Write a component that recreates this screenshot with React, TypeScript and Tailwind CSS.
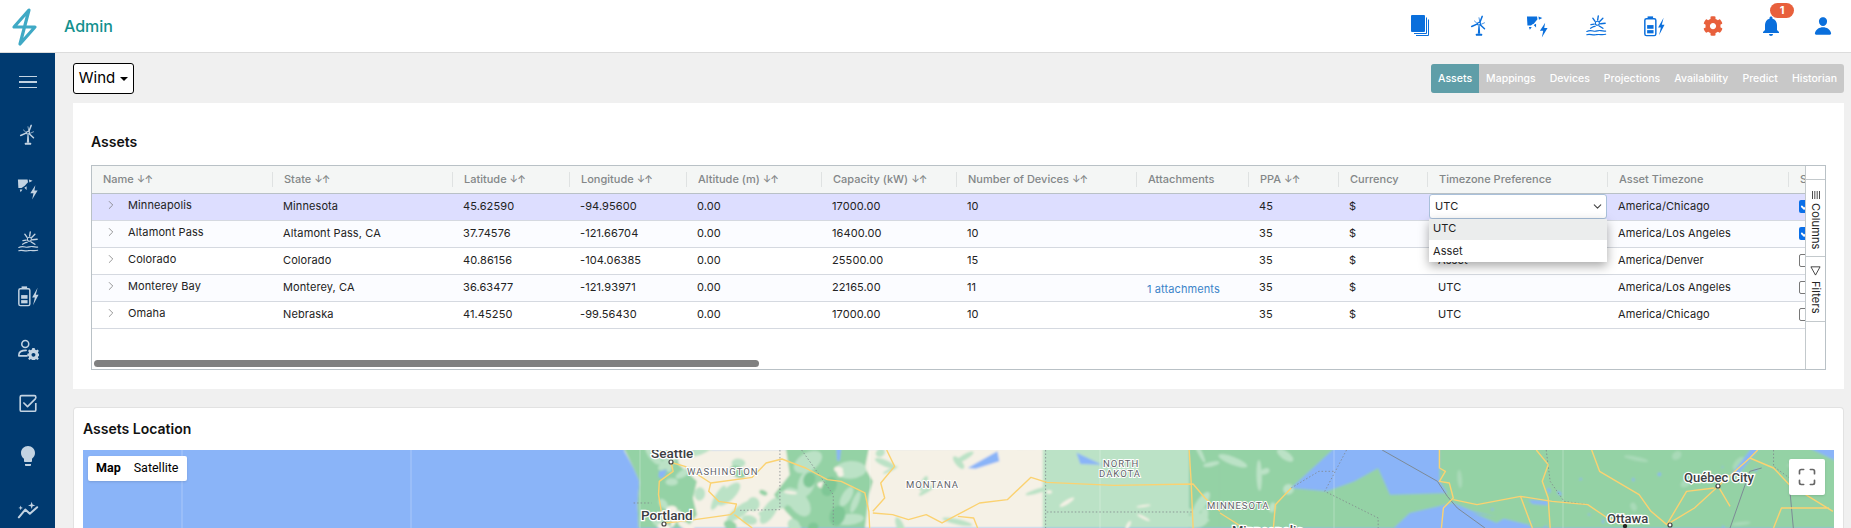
import { Check, ChevronDown, ChevronRight, Maximize } from 'lucide-react';
import { MdLightbulb, MdNotifications } from 'react-icons/md';
import { FaCog } from 'react-icons/fa';
import { IoPerson } from 'react-icons/io5';

function Logo() {
  return (
    <svg viewBox="0 0 50 53" className="w-[50px] h-[53px]">
      <path d="M29 10 L14 27 H35 L20 44 Z" fill="none" stroke="#3fa9c5" strokeWidth="3.2" strokeLinecap="round" strokeLinejoin="round" />
    </svg>
  );
}

function PagesIcon() {
  return (
    <svg viewBox="0 0 20 24" className="w-[20px] h-[24px] text-[#0a6fdc]">
      <rect x="1" y="1" width="14" height="17" rx="1" fill="currentColor" />
      <path d="M16.5 3.5 V19.5 H4" fill="none" stroke="currentColor" strokeWidth="1" />
      <path d="M18.5 5.5 V21.5 H6" fill="none" stroke="currentColor" strokeWidth="1" />
    </svg>
  );
}

function TurbineIcon({ className }: { className: string }) {
  return (
    <svg viewBox="0 0 24 24" className={className}>
      <g fill="none" stroke="currentColor" strokeLinecap="round">
        <circle cx="12" cy="9.5" r="1.6" strokeWidth="1.3" />
        <path d="M13 8 L15.5 1.5 M10.4 9.6 L4 12.5 M13.3 10.6 L18 15" strokeWidth="1.6" />
        <path d="M13 8 L12 3 M10.4 9.6 L7 6.5 M13.3 10.6 L18 8.5" strokeWidth="0.8" />
      </g>
      <path d="M11.3 12 H12.7 L13.3 20.5 H10.7 Z" fill="currentColor" />
      <rect x="8.6" y="20.5" width="6.8" height="2.2" rx="0.6" fill="currentColor" />
    </svg>
  );
}

function SolarIcon({ className }: { className: string }) {
  return (
    <svg viewBox="0 0 24 24" className={className}>
      <g fill="currentColor">
        <path d="M1 1.5 H11.5 L12 4.5 L8.5 8.5 L5 11 L1.5 11 Z" />
        <path d="M13 1.5 L17 3 L13.5 5 Z M3 12.5 L6 12.5 L4 15.5 Z M8 10.5 L10.5 9 L10.5 13 Z" />
        <path d="M20 8 L14.5 16.5 H18 L16.5 23.5 L22.5 13.5 H19 Z" />
      </g>
    </svg>
  );
}

function WaveSunIcon({ className }: { className: string }) {
  return (
    <svg viewBox="0 0 24 24" className={className}>
      <g fill="none" stroke="currentColor" strokeLinecap="round">
        <circle cx="13.5" cy="9" r="2.2" strokeWidth="1.2" />
        <path d="M13.8 5.5 L14.5 1 M11 7 L8.5 3.5 M16 7 L19.5 3.5 M17 9.5 L22 9 M15.5 12 L19.5 14.5 M10 10 L6.5 10.5" strokeWidth="1.5" />
        <path d="M6 14.5 C8 13.5 9 12.5 11 12.5 M2 18 C5 16.5 7 17 9 17.5 C12 18.5 14 16.5 17 17 C19 17.5 20 17.8 22.5 17.5" strokeWidth="1.3" />
        <path d="M2 21.5 C5 20.5 8 22 12 21.5 C16 20.8 19 22 22.5 21" strokeWidth="1.3" />
      </g>
    </svg>
  );
}

function BatteryIcon({ className }: { className: string }) {
  return (
    <svg viewBox="0 0 24 24" className={className}>
      <rect x="2" y="4" width="12" height="18.5" rx="1.8" fill="none" stroke="currentColor" strokeWidth="1.6" />
      <g fill="currentColor">
        <rect x="5" y="1.5" width="6" height="2.2" />
        <rect x="4.5" y="11" width="7" height="4" />
        <rect x="4.5" y="16.5" width="7" height="3.5" />
        <path d="M22.5 3 L16.5 13.5 H19.5 L17.5 22 L23.5 10.5 H20.5 Z" />
      </g>
    </svg>
  );
}

function UserGearIcon({ className }: { className: string }) {
  return (
    <svg viewBox="0 0 24 24" className={className}>
      <g fill="none" stroke="currentColor" strokeWidth="1.7" strokeLinecap="round">
        <circle cx="9" cy="6.5" r="3.8" />
        <path d="M2 19.5 V18.5 C2 15 5 13.5 10 13.5 M2 19.5 H11" />
      </g>
      <g transform="translate(12.5 11) scale(0.42)" fill="currentColor">
        <path d="M10 0 H16 L17 4 L20.5 5.5 L24 3.5 L27 7.5 L24.5 10.5 L25.5 14 L29 15 V20 L25.5 21 L24.5 24.5 L27 27.5 L23 31 L20 28.5 L17 30 L16 34 H10 L9 30 L6 28.5 L3 31 L-1 27.5 L1.5 24.5 L0.5 21 L-3 20 V15 L0.5 14 L1.5 10.5 L-1 7.5 L2 3.5 L5.5 5.5 L9 4 Z M13 12.5 A5 5 0 1 0 13.01 12.5 Z" fillRule="evenodd" />
      </g>
    </svg>
  );
}

function CheckIcon({ className }: { className: string }) {
  return (
    <svg viewBox="0 0 24 24" className={className} fill="none" stroke="currentColor" strokeWidth="1.8">
      <path d="M20.5 12 V19.5 A1.5 1.5 0 0 1 19 21 H5 A1.5 1.5 0 0 1 3.5 19.5 V5.5 A1.5 1.5 0 0 1 5 4 H19 A1.5 1.5 0 0 1 20.5 5.5 V7" />
      <path d="M7.5 12 L11.5 16 L20 7.5" strokeLinecap="round" strokeLinejoin="round" />
    </svg>
  );
}

function TrendIcon({ className }: { className: string }) {
  return (
    <svg viewBox="0 0 24 24" className={className}>
      <path d="M2 20 L9 11.5 L14 16 L22 9" fill="none" stroke="currentColor" strokeWidth="2.2" strokeLinecap="round" strokeLinejoin="round" />
      <path d="M16 3 L17 6 L20 7 L17 8 L16 11 L15 8 L12 7 L15 6 Z M4 7 L4.7 9 L6.5 9.7 L4.7 10.4 L4 12.4 L3.3 10.4 L1.5 9.7 L3.3 9 Z" fill="currentColor" />
    </svg>
  );
}

function TopNav() {
  return (
    <header className="h-[53px] shrink-0 flex items-center bg-white border-b border-[#dcdcdc]">
      <Logo />
      <span className="ml-[14px] text-base font-medium text-[#12908e]">Admin</span>
      <div className="ml-auto flex items-center pr-[5px]">
        <div className="w-[58.5px] flex justify-center"><PagesIcon /></div>
        <div className="w-[58.5px] flex justify-center text-[#0a6fdc]"><TurbineIcon className="w-[22px] h-[24px]" /></div>
        <div className="w-[58.5px] flex justify-center text-[#0a6fdc]"><SolarIcon className="w-[23px] h-[23px]" /></div>
        <div className="w-[58.5px] flex justify-center text-[#0a6fdc]"><WaveSunIcon className="w-[22px] h-[22px]" /></div>
        <div className="w-[58.5px] flex justify-center text-[#0a6fdc]"><BatteryIcon className="w-[22px] h-[22px]" /></div>
        <div className="w-[58.5px] flex justify-center"><FaCog className="w-[20px] h-[20px] text-[#e8603c]" /></div>
        <div className="relative w-[58.5px] flex justify-center">
          <MdNotifications className="w-[24px] h-[24px] text-[#0a6fdc]" />
          <span className="absolute left-[28px] top-[-11px] w-[24px] h-[15px] rounded-full bg-[#e8603c] text-white text-[11px] font-bold leading-[15px] text-center">1</span>
        </div>
        <div className="w-[45.5px] flex justify-center"><IoPerson className="w-[20px] h-[20px] text-[#0a6fdc]" /></div>
      </div>
    </header>
  );
}

function SideNav() {
  const iconClass = 'w-[22px] h-[22px]';
  return (
    <aside className="w-[55px] shrink-0 bg-[#003a70] text-[#c3d3e2] flex flex-col items-center pt-[2px]">
      <div className="h-[53.5px] shrink-0 flex flex-col justify-center gap-[4px]">
        <div className="w-[18px] h-[1.5px] bg-[#c3d3e2]" />
        <div className="w-[18px] h-[1.5px] bg-[#c3d3e2]" />
        <div className="w-[18px] h-[1.5px] bg-[#c3d3e2]" />
      </div>
      <div className="h-[53.5px] shrink-0 flex items-center"><TurbineIcon className={iconClass} /></div>
      <div className="h-[53.5px] shrink-0 flex items-center"><SolarIcon className={iconClass} /></div>
      <div className="h-[53.5px] shrink-0 flex items-center"><WaveSunIcon className={iconClass} /></div>
      <div className="h-[53.5px] shrink-0 flex items-center"><BatteryIcon className={iconClass} /></div>
      <div className="h-[53.5px] shrink-0 flex items-center"><UserGearIcon className={iconClass} /></div>
      <div className="h-[53.5px] shrink-0 flex items-center"><CheckIcon className={iconClass} /></div>
      <div className="h-[53.5px] shrink-0 flex items-center"><MdLightbulb className="w-[24px] h-[24px]" /></div>
      <div className="h-[53.5px] shrink-0 flex items-center"><TrendIcon className={iconClass} /></div>
    </aside>
  );
}

const tabs = ['Mappings', 'Devices', 'Projections', 'Availability', 'Predict', 'Historian'];

const headers = [
  { label: 'Name', sort: true },
  { label: 'State', sort: true },
  { label: 'Latitude', sort: true },
  { label: 'Longitude', sort: true },
  { label: 'Altitude (m)', sort: true },
  { label: 'Capacity (kW)', sort: true },
  { label: 'Number of Devices', sort: true },
  { label: 'Attachments', sort: false },
  { label: 'PPA', sort: true },
  { label: 'Currency', sort: false },
  { label: 'Timezone Preference', sort: false },
  { label: 'Asset Timezone', sort: false },
  { label: 'S', sort: false },
];

const rows = [
  { name: 'Minneapolis', state: 'Minnesota', lat: '45.62590', lon: '-94.95600', cap: '17000.00', dev: '10', att: '', ppa: '45', pref: 'UTC', tz: 'America/Chicago', on: true },
  { name: 'Altamont Pass', state: 'Altamont Pass, CA', lat: '37.74576', lon: '-121.66704', cap: '16400.00', dev: '10', att: '', ppa: '35', pref: 'UTC', tz: 'America/Los Angeles', on: true },
  { name: 'Colorado', state: 'Colorado', lat: '40.86156', lon: '-104.06385', cap: '25500.00', dev: '15', att: '', ppa: '35', pref: 'Asset', tz: 'America/Denver', on: false },
  { name: 'Monterey Bay', state: 'Monterey, CA', lat: '36.63477', lon: '-121.93971', cap: '22165.00', dev: '11', att: '1 attachments', ppa: '35', pref: 'UTC', tz: 'America/Los Angeles', on: false },
  { name: 'Omaha', state: 'Nebraska', lat: '41.45250', lon: '-99.56430', cap: '17000.00', dev: '10', att: '', ppa: '35', pref: 'UTC', tz: 'America/Chicago', on: false },
];

function TimezoneSelect() {
  return (
    <div className="relative z-10">
      <div className="h-[25px] flex items-center justify-between pl-[5px] pr-[2px] bg-white rounded-[3px] border border-[#a9c0da]">
        <span>UTC</span>
        <ChevronDown className="w-[13px] h-[13px] text-[#444]" />
      </div>
      <div className="absolute top-full left-0 right-0 bg-white shadow-[0_4px_10px_rgba(0,0,0,0.35)]">
        <div className="h-[21px] flex items-center pl-[4px] pb-[2px] bg-[#ebeded]">UTC</div>
        <div className="h-[22px] flex items-center pl-[4px]">Asset</div>
      </div>
    </div>
  );
}

function AssetsTable() {
  return (
    <div className="relative h-[205px] overflow-hidden border border-[#b9c1c6] text-[11px] tracking-[0.1px] text-[#222]">
      <table className="table-fixed border-collapse w-[1760px]">
        <colgroup>
          <col className="w-[180px]" />
          <col className="w-[180px]" />
          <col className="w-[117px]" />
          <col className="w-[117px]" />
          <col className="w-[135px]" />
          <col className="w-[135px]" />
          <col className="w-[180px]" />
          <col className="w-[112px]" />
          <col className="w-[90px]" />
          <col className="w-[89px]" />
          <col className="w-[180px]" />
          <col className="w-[181px]" />
          <col className="w-[64px]" />
        </colgroup>
        <thead>
          <tr className="h-[27px] bg-[#f4f6f5] border-b border-[#b9c1c6]">
            {headers.map((h, i) => (
              <th key={h.label} className="p-0 font-medium text-left text-[#838788] tracking-normal">
                <div className={i === 0 ? 'h-[15px] flex items-center gap-[3px] pl-[11px]' : 'h-[15px] flex items-center gap-[3px] pl-[11px] border-l border-[#dfe2e2]'}>
                  {h.label}
                  {h.sort && <span className="text-[10px] tracking-[-1px]">↓↑</span>}
                </div>
              </th>
            ))}
          </tr>
        </thead>
        <tbody>
          {rows.map((r, i) => (
            <tr key={r.name} className={i === 0 ? 'h-[27px] bg-[#dddeff] border-b border-[#d5d9e0]' : i % 2 === 1 ? 'h-[27px] bg-[#fbfcff] border-b border-[#d5d9e0]' : 'h-[27px] bg-white border-b border-[#d5d9e0]'}>
              <td className="p-0">
                <div className="flex items-center pb-[3px]">
                  <ChevronRight className="ml-[12px] w-[14px] h-[14px] text-[#777]" strokeWidth={1.3} />
                  <span className="ml-[10px]">{r.name}</span>
                </div>
              </td>
              <td className="p-0 pl-[11px]">{r.state}</td>
              <td className="p-0 pl-[11px]">{r.lat}</td>
              <td className="p-0 pl-[11px]">{r.lon}</td>
              <td className="p-0 pl-[11px]">0.00</td>
              <td className="p-0 pl-[11px]">{r.cap}</td>
              <td className="p-0 pl-[11px]">{r.dev}</td>
              <td className="p-0 pl-[11px] pt-[3px] text-[#3b84c9]">{r.att}</td>
              <td className="p-0 pl-[11px]">{r.ppa}</td>
              <td className="p-0 pl-[11px]">$</td>
              <td className={i === 0 ? 'p-0 pl-[2px]' : 'p-0 pl-[11px]'}>{i === 0 ? <TimezoneSelect /> : r.pref}</td>
              <td className="p-0 pl-[11px]">{r.tz}</td>
              <td className="p-0 pl-[11px]">
                {r.on ? (
                  <div className="w-[13px] h-[13px] flex items-center justify-center rounded-[2px] bg-[#0a6fe8]">
                    <Check className="w-[11px] h-[11px] text-white" strokeWidth={4} />
                  </div>
                ) : (
                  <div className="w-[13px] h-[13px] rounded-[2px] bg-white border border-[#777]" />
                )}
              </td>
            </tr>
          ))}
        </tbody>
      </table>
      <div className="absolute left-[2px] bottom-[2px] w-[665px] h-[7px] rounded-full bg-[#808080]" />
      <div className="absolute right-0 top-0 bottom-0 w-[20px] flex flex-col bg-white border-l border-[#c3c9cc] pt-[13px] text-[#222]">
        <div className="h-[78px] shrink-0 flex flex-col items-center pt-[10px] gap-[3px] border-y border-[#c3c9cc]">
          <svg viewBox="0 0 10 10" className="w-[10px] h-[10px]">
            <path d="M1.5 1 V9 M3.8 1 V9 M6.2 1 V9 M8.5 1 V9" stroke="currentColor" strokeWidth="0.8" />
          </svg>
          <span className="[writing-mode:vertical-rl]">Columns</span>
        </div>
        <div className="h-[65px] shrink-0 flex flex-col items-center pt-[8px] gap-[5px] border-b border-[#c3c9cc]">
          <svg viewBox="0 0 12 12" className="w-[11px] h-[11px]">
            <path d="M1 2 H11 L6 11 Z" fill="none" stroke="currentColor" strokeWidth="0.9" strokeLinejoin="round" />
          </svg>
          <span className="[writing-mode:vertical-rl]">Filters</span>
        </div>
      </div>
    </div>
  );
}

const labelClass = 'font-[family-name:Roboto,sans-serif] [paint-order:stroke]';

// scattered patches for the map's terrain, same result on every render
function patches(seed: number, x0: number, x1: number, n: number, rx: number, ry: number) {
  let s = seed;
  const next = () => {
    s = (s * 16807) % 2147483647;
    return (s % 10000) / 10000;
  };
  return Array.from({ length: n }, () => ({
    cx: x0 + next() * (x1 - x0),
    cy: 450 + next() * 78,
    rx: rx * (0.4 + next()),
    ry: ry * (0.4 + next()),
    r: next() * 180,
  }));
}

const terrain = [
  { fill: '#bbe2c6', items: patches(11, 640, 705, 10, 11, 6) },
  { fill: '#f5f1e6', items: patches(23, 660, 700, 4, 7, 3) },
  { fill: '#bbe2c6', items: patches(41, 705, 785, 9, 13, 6) },
  { fill: '#94d2a5', items: patches(37, 720, 775, 3, 8, 4) },
  { fill: '#bbe2c6', items: patches(53, 785, 875, 10, 12, 7) },
  { fill: '#f5f1e6', items: patches(67, 790, 870, 4, 7, 3) },
  { fill: '#7fc796', items: patches(71, 790, 860, 4, 9, 6) },
  { fill: '#bbe2c6', items: patches(83, 875, 1040, 10, 11, 3) },
  { fill: '#f5f1e6', items: patches(97, 1045, 1190, 5, 6, 2) },
  { fill: '#bbe2c6', items: patches(101, 1190, 1290, 12, 11, 5) },
  { fill: '#a9dab8', items: patches(113, 1450, 1830, 8, 10, 3) },
  { fill: '#8ab4f8', items: patches(127, 1450, 1760, 14, 2, 1.2) },
];

function MapDrawing() {
  const z11 = 'translate(600 448) scale(0.3954 0.3333)';
  const z12 = 'translate(1220 448) scale(0.3954 0.3333)';
  return (
    <svg viewBox="83 450 1751 78" preserveAspectRatio="none" className="block w-full h-full bg-[#8ab4f8]">
      <defs>
        <filter id="soft" x="-5%" y="-5%" width="110%" height="110%">
          <feGaussianBlur stdDeviation="1" />
        </filter>
      </defs>
      <g filter="url(#soft)">
        <g transform={z11} fill="#f5f1e6">
          <path d="M60 6 L1130 0 V240 H98 L95 170 L100 100 L85 60 Z" />
          <path d="M1120 0 H1490 V240 H1120 Z" fill="#bbe2c6" />
          <path d="M1490 0 H1568 V240 H1490 Z" fill="#94d2a5" />
          <g fill="#94d2a5">
            <path d="M60 0 H190 L200 50 L245 100 L235 150 L245 200 L220 240 H98 L95 170 L100 100 L85 60 Z" />
            <path d="M470 0 H680 L670 60 L690 100 L680 140 L670 240 H510 L470 190 L440 140 L480 80 Z" />
          </g>
        </g>
        <g transform={z12}>
          <path d="M0 0 H1568 V240 H0 Z" fill="#94d2a5" />
        </g>
        {terrain.map((t, i) => (
          <g key={i} fill={t.fill}>
            {t.items.map((p, j) => (
              <ellipse key={j} cx={p.cx} cy={p.cy} rx={p.rx} ry={p.ry} transform={`rotate(${p.r} ${p.cx} ${p.cy})`} />
            ))}
          </g>
        ))}
        <g transform={z11} fill="#8ab4f8">
          <path d="M598 0 H610 L606 38 L600 38 Z M150 70 L170 65 L160 90 L148 88 Z M930 60 L1005 10 L1010 40 L950 62 Z M1205 14 L1270 50 L1215 48 Z" />
        </g>
        <g transform={z12} fill="#8ab4f8">
          <path d="M180 120 L290 0 H555 L555 100 L575 135 L430 140 L400 60 L340 100 L270 130 Z" />
          <path d="M440 240 L480 195 L590 165 L640 190 L780 230 L790 240 Z" />
          <path d="M780 155 L830 160 L830 172 L790 168 Z" />
          <path d="M1290 85 L1345 0 H1365 L1310 80 Z M1490 0 H1560 V40 Z" />
        </g>
        <path transform={z12} d="M640 195 L720 210 L700 225 Z" fill="#94d2a5" />
      </g>
      <g stroke="#ffffff" strokeOpacity="0.28" strokeWidth="1">
        <path d="M182 450 V528 M411 450 V528 M640 450 V528 M870 450 V528 M1100 450 V528 M1334 450 V528 M1563 450 V528" />
      </g>
      <g fill="none" stroke="#80868b" strokeWidth="0.8" strokeDasharray="1.5 2">
        <path transform={z11} vectorEffect="non-scaling-stroke" d="M1127 6 V240 M1130 192 H1500 M455 6 V185 L350 187 M510 6 L560 90 L590 140 L590 230 M85 165 H130" />
        <path transform={z12} vectorEffect="non-scaling-stroke" d="M320 6 L265 130 L400 210 V240 M180 120 L250 70 H290 M825 6 L835 100 L870 160 L930 170 M1400 6 V55 L1440 90" />
      </g>
      <path transform={z12} vectorEffect="non-scaling-stroke" fill="none" stroke="#7d8a96" strokeWidth="1" d="M410 6 L550 100 L575 145 L600 180 L670 240 M1290 240 L1340 70 L1370 60 M1440 110 L1450 240" />
      <g fill="none" stroke="#fbd271" strokeWidth="1.4" strokeLinejoin="round">
        <g transform={z11}>
          <path vectorEffect="non-scaling-stroke" d="M180 45 L185 70 L150 100 L148 140 L155 190 L165 225" />
          <path vectorEffect="non-scaling-stroke" d="M185 45 L215 55 L280 105 L385 88 L420 45 L460 33 L520 60 L575 95 L610 100 L670 135 L680 190 L682 240" />
          <path vectorEffect="non-scaling-stroke" d="M280 105 L275 130 L300 160 L345 168 L340 190 L330 200 L240 215 L165 225 M340 200 L385 240" />
          <path vectorEffect="non-scaling-stroke" d="M725 6 L745 55 L710 105 L720 150 L690 190" />
          <path vectorEffect="non-scaling-stroke" d="M690 195 L740 200 L780 215 L825 200 L865 225 L960 165 L1030 155 L1090 88 L1130 103 L1300 112 L1500 108 L1530 150 L1568 190" />
          <path vectorEffect="non-scaling-stroke" d="M1490 6 L1495 100 L1500 240 M905 205 L945 210 L955 240" />
        </g>
        <g transform={z12}>
          <path vectorEffect="non-scaling-stroke" d="M555 6 V60 L570 70 L555 100 L580 105 L590 150 L565 180 L560 240" />
          <path vectorEffect="non-scaling-stroke" d="M590 155 L650 170 L760 145 L840 160 L930 170 L980 210 L1020 230" />
          <path vectorEffect="non-scaling-stroke" d="M800 6 L830 50 L815 100 L830 150 L835 240 M760 145 L790 240" />
          <path vectorEffect="non-scaling-stroke" d="M940 6 L960 70 L1060 140 L1090 190 L1130 230 L1200 180 L1260 115 L1340 30 L1360 6" />
          <path vectorEffect="non-scaling-stroke" d="M1340 30 L1400 60 L1440 110 L1550 190 M1260 115 L1290 175 M1130 230 L1180 130 L1250 120 M1400 240 L1420 180 L1540 180" />
          <path vectorEffect="non-scaling-stroke" d="M180 120 L140 170 L135 240 M0 195 L60 240" />
        </g>
      </g>
      <g fill="#fff" stroke="#444" strokeWidth="1.2">
        <circle cx="671" cy="462" r="2" />
        <circle cx="664" cy="524" r="2" />
        <circle cx="1718" cy="486" r="2" />
        <circle cx="1670" cy="525" r="2" />
      </g>
      <circle cx="1625" cy="526" r="2.2" fill="#222" />
      <g stroke="#fff" strokeWidth="2.5" fill="#3c4043" className={labelClass}>
        <text x="651" y="458" fontSize="13.5" fontWeight="500">Seattle</text>
        <text x="641" y="520" fontSize="13.5" fontWeight="500">Portland</text>
        <text x="1607" y="523" fontSize="13" fontWeight="500">Ottawa</text>
        <text x="1684" y="482" fontSize="13" fontWeight="500">Québec City</text>
        <text x="1232" y="535" fontSize="13" fontWeight="500">Minneapolis</text>
      </g>
      <g stroke="#fff" strokeWidth="2" fill="#5f6368" fontSize="9.5" letterSpacing="1" className={labelClass}>
        <text x="687" y="475">WASHINGTON</text>
        <text x="906" y="488">MONTANA</text>
        <text x="1103" y="467">NORTH</text>
        <text x="1099" y="477">DAKOTA</text>
        <text x="1207" y="509">MINNESOTA</text>
      </g>
    </svg>
  );
}

function LocationCard() {
  return (
    <section className="mt-[18px] h-[130px] bg-white rounded-t-[4px] border border-b-0 border-[#e2e2e2] px-[9px]">
      <h2 className="h-[42px] flex items-center text-sm font-semibold text-[#111]">Assets Location</h2>
      <div className="relative h-[78px] overflow-hidden">
        <MapDrawing />
        <div className="absolute left-[5px] top-[6px] w-[99px] h-[25px] flex items-center gap-[13px] pl-[8px] bg-white rounded-[2px] shadow text-[12.5px] text-black font-[family-name:Roboto,sans-serif]">
          <span className="font-bold">Map</span>
          <span>Satellite</span>
        </div>
        <div className="absolute right-[9px] top-[9px] w-[36px] h-[36px] flex items-center justify-center bg-white rounded-[2px] shadow">
          <Maximize className="w-[20px] h-[20px] text-[#666]" strokeWidth={2} />
        </div>
      </div>
    </section>
  );
}

export default function App() {
  return (
    <div className="w-[1851px] h-[528px] overflow-hidden flex flex-col bg-white font-[family-name:Inter,sans-serif]">
      <TopNav />
      <div className="flex-1 flex min-h-0">
        <SideNav />
        <main className="flex-1 min-w-0 bg-[#f0f0f0] pl-[18px] pr-[7px] pt-[10px]">
          <div className="h-[31px] flex items-center justify-between">
            <button className="h-[31px] w-[61px] flex items-center justify-center gap-[5px] bg-white border border-black rounded-[3px] text-[15px] text-black">
              Wind
              <span className="w-0 h-0 border-x-[4px] border-x-transparent border-t-[4px] border-t-black" />
            </button>
            <div className="h-[29px] flex items-center rounded-[3px] overflow-hidden bg-[#c8c8c8] text-[10.5px] font-medium text-white">
              <div className="h-full flex items-center px-[7px] bg-[#5f9ea8]">Assets</div>
              {tabs.map((t) => (
                <div key={t} className="h-full flex items-center px-[7px]">{t}</div>
              ))}
            </div>
          </div>
          <section className="mt-[9px] h-[286px] bg-white px-[18px]">
            <h2 className="h-[62px] pt-[16px] flex items-center text-sm font-semibold text-[#111]">Assets</h2>
            <AssetsTable />
          </section>
          <LocationCard />
        </main>
      </div>
    </div>
  );
}
